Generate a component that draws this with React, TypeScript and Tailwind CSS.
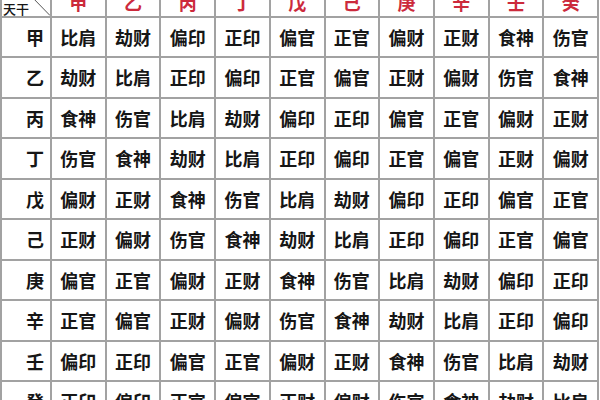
import { Fragment } from "react";

const STEMS = ["甲", "乙", "丙", "丁", "戊", "己", "庚", "辛", "壬", "癸"];

// rows: the other stem, columns: the day stem
const ROWS: string[][] = [
  ["比肩", "劫财", "偏印", "正印", "偏官", "正官", "偏财", "正财", "食神", "伤官"],
  ["劫财", "比肩", "正印", "偏印", "正官", "偏官", "正财", "偏财", "伤官", "食神"],
  ["食神", "伤官", "比肩", "劫财", "偏印", "正印", "偏官", "正官", "偏财", "正财"],
  ["伤官", "食神", "劫财", "比肩", "正印", "偏印", "正官", "偏官", "正财", "偏财"],
  ["偏财", "正财", "食神", "伤官", "比肩", "劫财", "偏印", "正印", "偏官", "正官"],
  ["正财", "偏财", "伤官", "食神", "劫财", "比肩", "正印", "偏印", "正官", "偏官"],
  ["偏官", "正官", "偏财", "正财", "食神", "伤官", "比肩", "劫财", "偏印", "正印"],
  ["正官", "偏官", "正财", "偏财", "伤官", "食神", "劫财", "比肩", "正印", "偏印"],
  ["偏印", "正印", "偏官", "正官", "偏财", "正财", "食神", "伤官", "比肩", "劫财"],
  ["正印", "偏印", "正官", "偏官", "正财", "偏财", "伤官", "食神", "劫财", "比肩"],
];

export default function App() {
  return (
    <div className="w-[600px] h-[400px] overflow-hidden bg-white">
      <div
        className="mt-[-25px] w-[599px] grid grid-cols-[48px_repeat(10,minmax(0,1fr))] auto-rows-[38.5px] gap-[2px] p-[2px] bg-[#a2a2a2] text-[#161616]"
        style={{ fontFamily: '"Noto Sans CJK SC", "Noto Sans", sans-serif' }}
      >
        {/* Header corner */}
        <div className="relative bg-white flex items-end pl-[1px] pb-[1px]">
          <svg className="absolute inset-0 w-full h-full" viewBox="0 0 48 38.5" preserveAspectRatio="none">
            <line x1="10.5" y1="0" x2="48" y2="38.5" stroke="#555" strokeWidth="1" />
          </svg>
          <span className="relative text-[13px] leading-none font-medium">天干</span>
        </div>
        {STEMS.map((s) => (
          <div key={"h" + s} className="bg-white flex items-end justify-center pb-[5px]">
            <span className="text-[18px] leading-none font-bold text-[#cc2a3c]">{s}</span>
          </div>
        ))}

        {ROWS.map((row, i) => (
          <Fragment key={"r" + i}>
            <div className="bg-white flex items-center justify-end pr-[6px]">
              <span className="text-[18px] leading-none font-bold">{STEMS[i]}</span>
            </div>
            {row.map((cell, j) => (
              <div key={i + "-" + j} className="bg-white flex items-center justify-center">
                <span className="text-[18px] leading-none font-bold">{cell}</span>
              </div>
            ))}
          </Fragment>
        ))}
      </div>
    </div>
  );
}
